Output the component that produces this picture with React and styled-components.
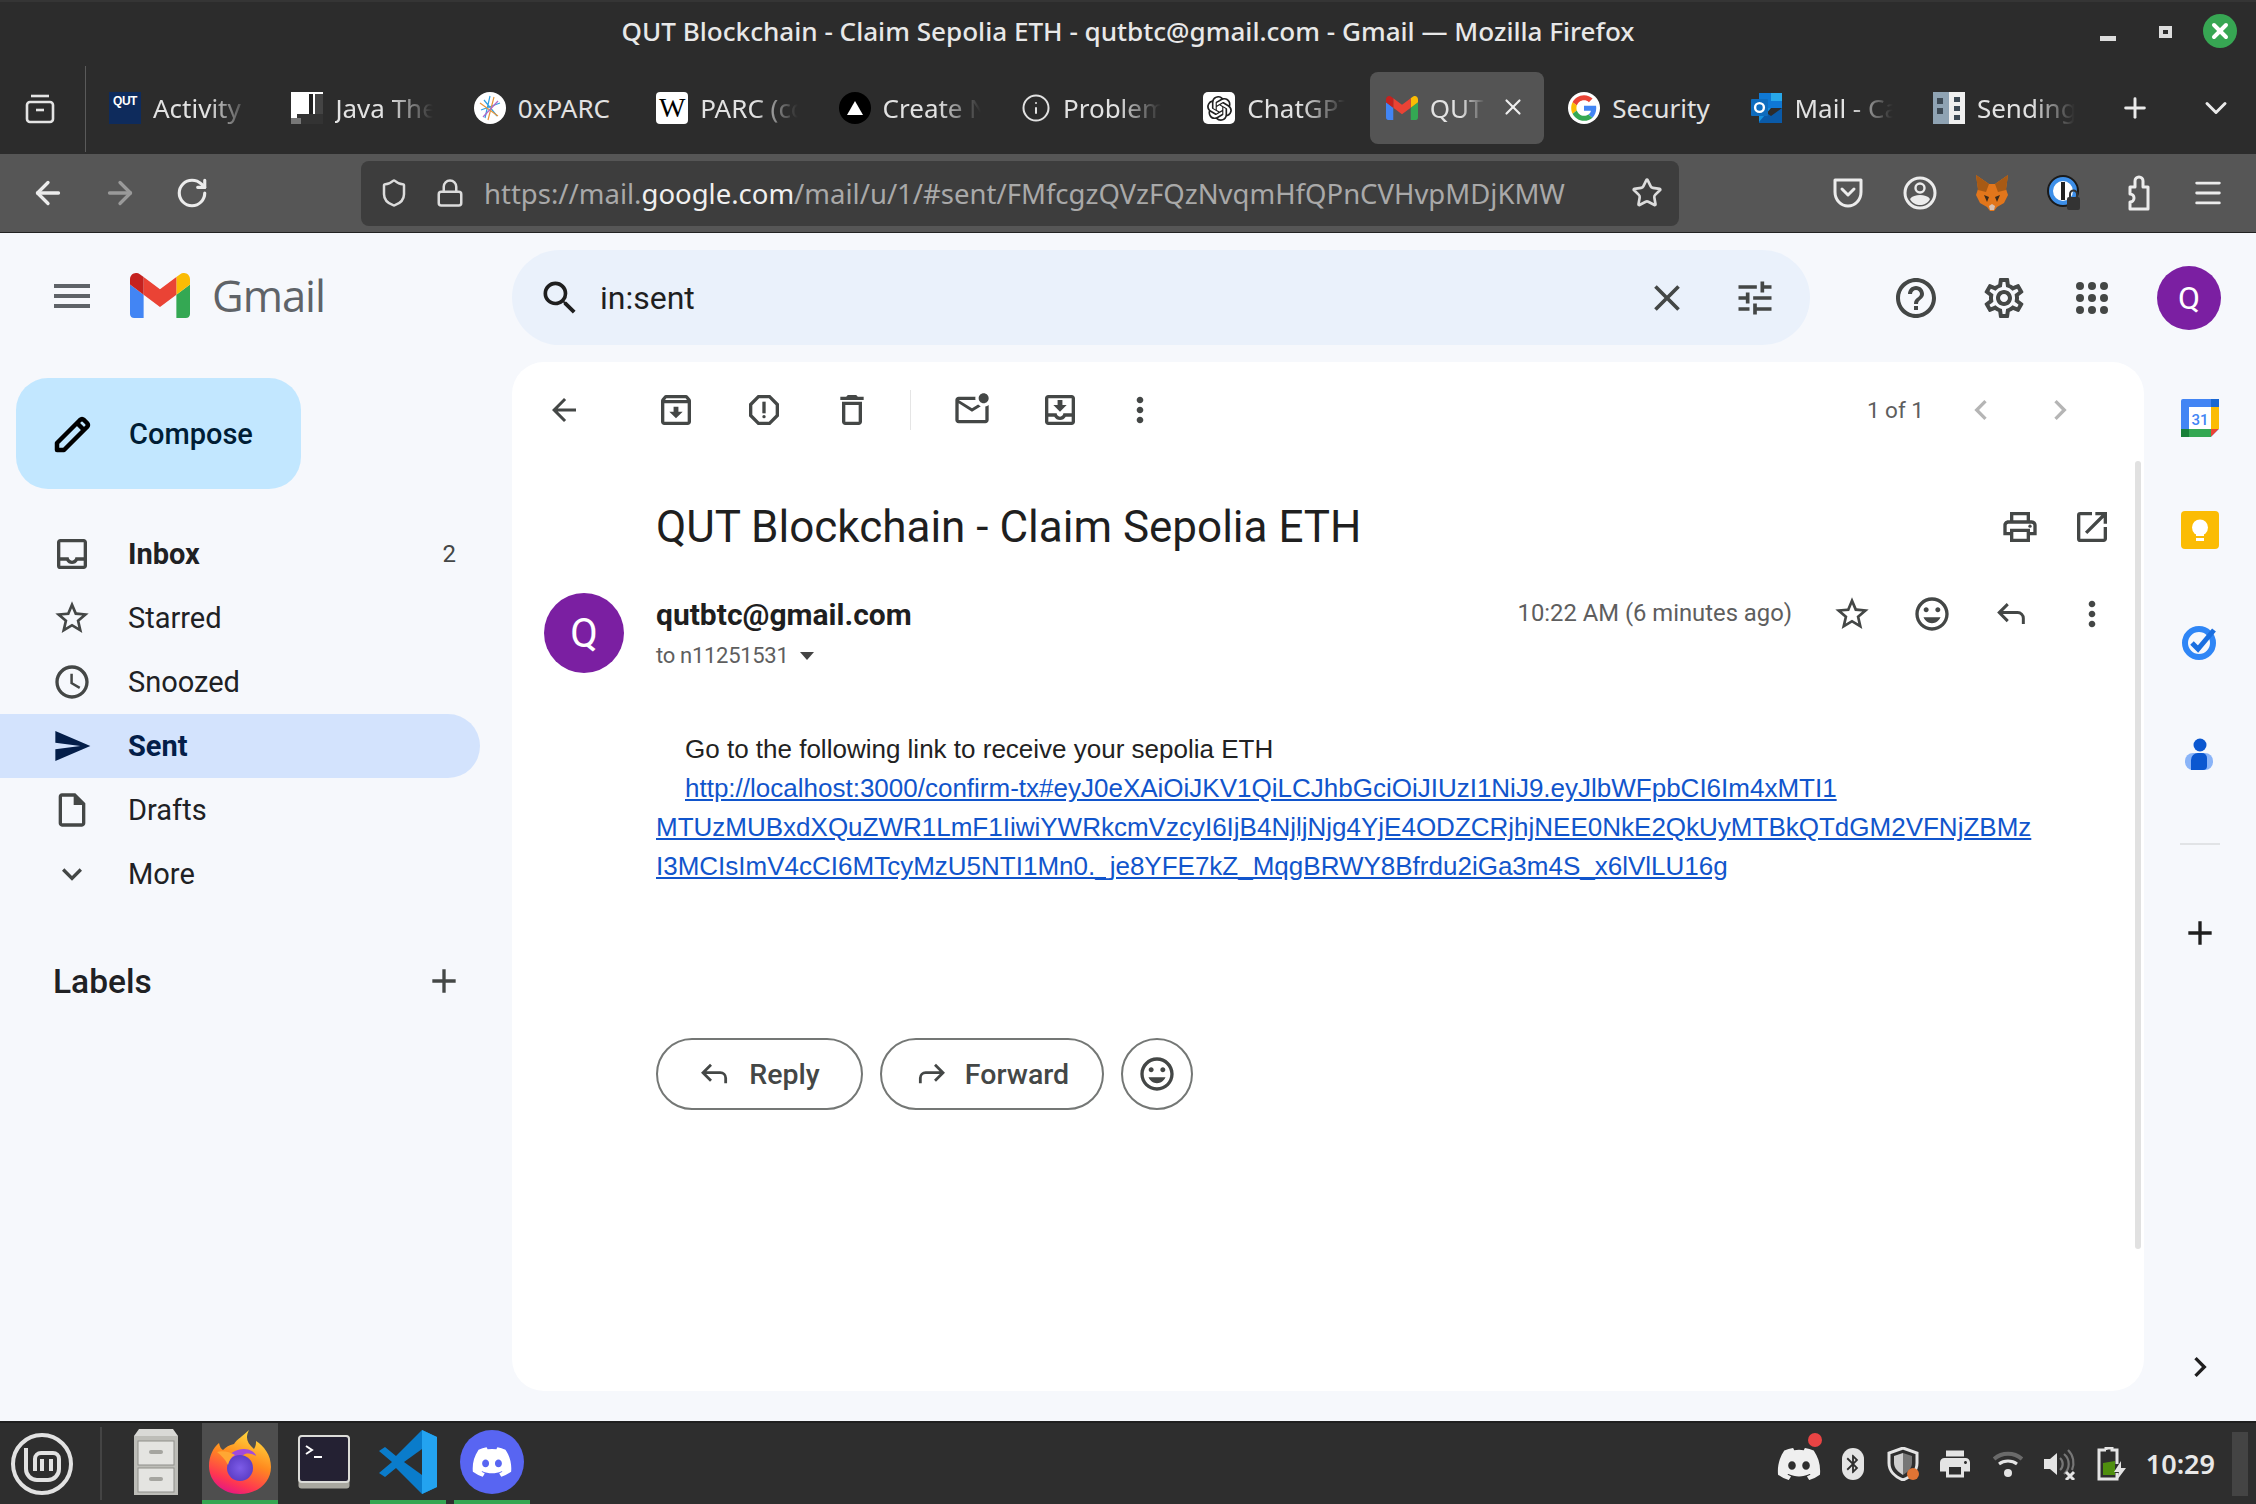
import React from "react";
import styled, { createGlobalStyle } from "styled-components";
import {
  MdMenu, MdSearch, MdClose, MdTune, MdOutlineHelpOutline, MdOutlineSettings, MdArrowBack,
  MdOutlineArchive, MdOutlineReport, MdOutlineDelete, MdOutlineMarkEmailUnread, MdOutlineMoveToInbox,
  MdMoreVert, MdOutlinePrint, MdOpenInNew, MdStarBorder, MdOutlineInsertEmoticon, MdChevronLeft,
  MdChevronRight, MdAdd, MdOutlineInbox, MdAccessTime, MdSend, MdOutlineInsertDriveFile, MdExpandMore,
  MdBluetooth, MdPrint,
} from "react-icons/md";
import { FaDiscord } from "react-icons/fa";
import { SiOpenai } from "react-icons/si";
import { ArrowLeft, ArrowRight, RotateCw, Shield, Lock, Star, Menu, Plus, ChevronDown, Info, X } from "lucide-react";

const Global = createGlobalStyle`
  html, body { margin: 0; padding: 0; background: #f6f8fc; }
  * { box-sizing: border-box; }
`;

const Page = styled.div`
  width: 2256px; height: 1504px; display: flex; flex-direction: column; overflow: hidden;
  font-family: Roboto, "Liberation Sans", sans-serif;
`;
const TitleBar = styled.div`
  height: 70px; background: #2c2c2c; border-top: 2px solid #353535; display: grid; grid-template-columns: 1fr auto 1fr;
  padding-bottom: 10px; align-items: center; color: #e8e8e8;
`;
const WindowTitle = styled.div`
  font: 500 26.1px "Noto Sans", sans-serif; grid-column: 2; white-space: nowrap;
`;
const WindowControls = styled.div`
  grid-column: 3; justify-self: end; display: flex; align-items: center; gap: 31px; padding-right: 19px;
`;
const MinBtn = styled.span` width: 16px; height: 5px; background: #ddd; margin: 15px 12px 0 0; `;
const MaxBtn = styled.span` width: 13px; height: 12px; border: 4px solid #ddd; background: #2c2c2c; margin-top: 2px; `;
const CloseBtn = styled.span`
  width: 34px; height: 34px; border-radius: 50%; background: #37a653; color: #fff; display: flex; align-items: center; justify-content: center;
`;
const TabBar = styled.div` height: 84px; background: #2c2c2c; display: flex; align-items: flex-start; `;
const ListAll = styled.div`
  width: 86px; height: 86px; margin-top: -4px; border-right: 1px solid #5a5a5a; display: flex; align-items: center; justify-content: center; padding-right: 6px; color: #e4e4e4;
`;
const TabStrip = styled.div` display: flex; margin-left: 7px; margin-top: 2px; `;
const Tab = styled.div`
  width: 174px; height: 72px; margin-right: 8.4px; padding-left: 16px; display: flex; align-items: center; gap: 12px; border-radius: 8px;
  background: ${p => (p.$active ? "#545454" : "transparent")}; color: #e2e2e2; position: relative; flex: none;
`;
const TabText = styled.span`
  font: 400 26px "Noto Sans", sans-serif; width: ${p => (p.$w ? p.$w : 100)}px; overflow: hidden; white-space: nowrap;
  -webkit-mask-image: linear-gradient(to right, #000 55%, transparent 98%); mask-image: linear-gradient(to right, #000 55%, transparent 98%);
  ${p => p.$full && "-webkit-mask-image: none; mask-image: none;"}
`;
const Favicon = styled.span`
  width: 32px; height: 32px; flex: none; display: flex; align-items: center; justify-content: center; overflow: hidden; position: relative;
  border-radius: ${p => p.$r || "0"}; background: ${p => p.$bg || "transparent"}; color: ${p => p.$c || "#fff"};
  font: ${p => p.$font || "700 13px 'Liberation Sans', sans-serif"};
`;
const QutFavicon = styled(Favicon)` align-items: flex-start; height: 32px; padding-top: 2px; letter-spacing: -0.5px; `;
const TabClose = styled.span` position: absolute; right: 18px; top: 22px; color: #eee; display: flex; background: #545454; `;
const TabEnd = styled.div` display: flex; align-items: center; height: 72px; margin-top: 2px; `;
const TabEndBtn = styled.span` width: ${p => p.$w}px; margin-left: ${p => p.$ml || 0}px; display: flex; justify-content: center; color: #eaeaea; `;

const Toolbar = styled.div`
  height: 79px; background: #565656; border-bottom: 1px solid #222; display: flex; align-items: center; padding: 0 12px;
`;
const NavBtn = styled.span`
  width: 72px; height: 64px; flex: none; display: flex; align-items: center; justify-content: center; color: ${p => (p.$dim ? "#9a9a9a" : "#ececec")};
`;
const UrlBar = styled.div`
  width: 1318px; height: 65px; margin-left: 133px; margin-right: 133px; background: #3d3d3d; border-radius: 8px; display: flex; align-items: center; padding-left: 18px; color: #dcdcdc; flex: none;
`;
const UrlIcon = styled.span` width: ${p => p.$w}px; flex: none; display: flex; color: #dcdcdc; `;
const UrlText = styled.div` flex: 1; font: 400 27.5px "Noto Sans", sans-serif; color: #a9a9a9; white-space: nowrap; padding-left: 13px;
  b { color: #f0f0f0; font-weight: 400; }
`;

const Mail = styled.div` flex: 1; min-height: 0; background: #f6f8fc; display: grid; grid-template-columns: 512px 1632px 112px; grid-template-rows: 129px 1fr; `;
const Brand = styled.div` display: flex; align-items: center; padding: 0 0 4px 48px; color: #444746; `;
const MenuBtn = styled.span` width: 82px; display: flex; color: #5f6368; padding-top: 1px; `;
const BrandName = styled.span` font: 400 43.5px "Open Sans", sans-serif; color: #5f6368; margin-left: 22px; letter-spacing: -1px; `;
const SearchRow = styled.div` grid-column: 2 / 4; display: flex; align-items: flex-start; padding-top: 17px; `;
const SearchBox = styled.div`
  width: 1298px; height: 95px; border-radius: 48px; background: #eaf1fb; display: flex; align-items: center; padding: 0 11px 0 26px; color: #1f1f1f;
`;
const SearchText = styled.span` flex: 1; font: 400 32px Roboto, sans-serif; margin-left: 18px; `;
const SearchAction = styled.span` width: 88px; display: flex; justify-content: center; color: #444746; `;
const TopIcons = styled.div` display: flex; margin-left: 62px; align-items: center; height: 95px; `;
const TopIcon = styled.span` width: 88px; display: flex; justify-content: center; color: #444746; `;
const UserAvatar = styled.span`
  width: 64px; height: 64px; margin-left: 21px; border-radius: 50%; background: #7b1fa2; color: #fff; display: flex; align-items: center; justify-content: center; font: 400 32px Roboto, sans-serif;
`;

const Sidebar = styled.aside` padding-top: 16px; `;
const Compose = styled.div`
  margin-left: 16px; width: 285px; height: 111px; background: #c2e7ff; border-radius: 32px; display: flex; align-items: center; padding-left: 37px; gap: 36px; color: #001d35;
  font: 500 29px Roboto, sans-serif;
`;
const NavList = styled.nav` margin-top: 33px; width: 480px; `;
const NavRow = styled.div`
  height: 64px; display: flex; align-items: center; padding: 0 24px 0 52px; gap: 36px; border-radius: 0 32px 32px 0;
  background: ${p => (p.$active ? "#d3e3fd" : "transparent")};
  color: ${p => (p.$active ? "#041e49" : "#202124")};
  font: ${p => (p.$bold ? 700 : 400)} 29px Roboto, sans-serif; & > svg { color: ${p => (p.$active ? "#041e49" : "#444746")}; flex: none; }
`;
const NavLabel = styled.span` flex: 1; `;
const Count = styled.span` font-size: 24px; font-weight: 400; color: #444746; `;
const LabelsHead = styled.div`
  margin-top: 45px; padding: 0 16px 0 53px; width: 480px; display: flex; align-items: center; justify-content: space-between; font: 500 33.5px Roboto, sans-serif; color: #202124; height: 60px;
  svg { color: #444746; }
`;

const Panel = styled.main` background: #fff; border-radius: 32px; margin-bottom: 30px; position: relative; display: flex; flex-direction: column; `;
const ScrollThumb = styled.div` position: absolute; right: 3px; top: 99px; height: 788px; width: 6px; border-radius: 3px; background: #e1e1e1; `;
const ActionBar = styled.div` height: 96px; display: flex; align-items: center; color: #444746; `;
const Act = styled.span` width: ${p => p.$w || 88}px; flex: none; display: flex; justify-content: center; color: ${p => p.$c || "#444746"}; margin-left: ${p => p.$ml || 0}px; `;
const ActDivider = styled.span` width: 1px; height: 40px; background: #e5e5e5; margin: 0 17px 0 14px; flex: none; `;
const Pager = styled.span` font: 400 22.5px Roboto, sans-serif; color: #5e5e5e; margin-left: auto; margin-right: 18px; `;
const SubjectRow = styled.div` height: 124px; padding-left: 144px; padding-right: 16px; display: flex; align-items: center; margin-top: 7px; `;
const Subject = styled.h1` flex: 1; margin: 0; font: 400 44px Roboto, sans-serif; color: #1f1f1f; `;
const MetaRow = styled.div` display: flex; margin-top: 4px; padding-left: 32px; height: 90px; align-items: flex-start; `;
const SenderAvatar = styled.span`
  width: 80px; height: 80px; border-radius: 50%; background: #7b1fa2; color: #fff; display: flex; align-items: center; justify-content: center; font: 400 40px Roboto, sans-serif; flex: none;
`;
const SenderCol = styled.div` margin-left: 32px; flex: 1; padding-top: 4px; `;
const SenderName = styled.div` font: 700 30px Roboto, sans-serif; color: #1f1f1f; line-height: 36px; `;
const SenderTo = styled.div` font: 400 22px Roboto, sans-serif; letter-spacing: -0.3px; color: #5e5e5e; line-height: 30px; margin-top: 8px; display: flex; align-items: center; gap: 8px; `;
const Caret = styled.span` width: 0; height: 0; border: 7px solid transparent; border-top: 8px solid #444; margin-top: 7px; margin-left: 4px; `;
const Time = styled.span` font: 400 23.8px Roboto, sans-serif; color: #5e5e5e; line-height: 36px; margin: 2px 20px 0 0; `;
const MsgIcons = styled.div` display: flex; margin: 3px 12px 0 0; `;
const MsgIcon = styled.span` width: 80px; height: 36px; display: flex; justify-content: center; align-items: center; color: #444746; `;
const Body = styled.div` padding-left: 144px; margin-top: 47px; font: 400 26px/39px "Liberation Sans", Arial, sans-serif; color: #222; `;
const BodyLine = styled.div` padding-left: ${p => (p.$indent ? 29 : 0)}px; white-space: nowrap; `;
const Link = styled.a` color: #1155cc; text-decoration: underline; `;
const ReplyRow = styled.div` display: flex; gap: 17px; padding-left: 144px; margin-top: 152px; `;
const ReplyBtn = styled.span`
  height: 72px; width: ${p => p.$w}px; border: 2px solid #747775; border-radius: 36px; display: flex; align-items: center; justify-content: center; gap: 18px; font: 500 28.5px Roboto, sans-serif; color: #444746; flex: none;
`;
const ReplySvg = styled.svg` transform: ${p => (p.$flip ? "scaleX(-1)" : "none")}; `;

const Rail = styled.aside` display: flex; flex-direction: column; align-items: center; `;
const RailItem = styled.div` height: 112px; width: 112px; display: flex; align-items: center; justify-content: center; flex: none; `;
const RailDivider = styled.div` width: 40px; height: 2px; background: #e1e3e6; margin: 33px 0 32px; flex: none; `;
const RailSpacer = styled.div` flex: 1; `;
const RailChevron = styled.div` height: 60px; display: flex; align-items: center; margin-bottom: 24px; color: #1f1f1f; `;

const Taskbar = styled.footer`
  height: 83px; background: #2e2e2e; border-top: 2px solid #1f1f1f; display: flex; position: relative; flex: none; align-items: stretch;
`;
const StartBtn = styled.div` width: 84px; display: flex; align-items: center; justify-content: center; color: #e0e0e0; flex: none; `;
const TaskSep = styled.div` width: 2px; background: #444; margin: 4px 16px; flex: none; `;
const TaskItem = styled.div`
  width: 76px; margin-right: 8px; display: flex; align-items: center; justify-content: center; flex: none; position: relative;
  background: ${p => (p.$active ? "#4e4e4e" : "transparent")};
  border-bottom: 4px solid ${p => (p.$run ? "#35a652" : "transparent")};
`;
const DiscordBubble = styled.span`
  width: 64px; height: 64px; border-radius: 50%; background: #5865f2; color: #fff; display: flex; align-items: center; justify-content: center;
`;
const Tray = styled.div` margin-left: auto; display: flex; align-items: center; color: #e4e4e4; `;
const TrayItem = styled.span` width: ${p => p.$w || 52}px; display: flex; justify-content: center; position: relative; `;
const BluetoothOval = styled.span`
  width: 22px; height: 32px; border-radius: 11px; background: #e4e4e4; color: #2e2e2e; display: flex; align-items: center; justify-content: center;
`;
const Clock = styled.span` font: 600 27px "Noto Sans", sans-serif; color: #e8e8e8; margin-left: 8px; margin-right: 17px; `;
const ShowDesk = styled.span` width: 16px; height: 64px; background: #444; margin-right: 8px; `;
const Badge = styled.span` position: absolute; top: -8px; right: 6px; width: 14px; height: 14px; border-radius: 50%; background: #e94444; `;

const Ic = ({ as: C, s = 44, ...r }) => <C size={s} {...r} />;

const GmailLogo = ({ w = 60, h = 45 }) => (
  <svg width={w} height={h} viewBox="52 42 88 66">
    <path fill="#4285f4" d="M58 108h14V74L52 59v43c0 3.32 2.69 6 6 6" />
    <path fill="#34a853" d="M120 108h14c3.32 0 6-2.69 6-6V59l-20 15" />
    <path fill="#fbbc04" d="M120 48v26l20-15v-8c0-7.42-8.47-11.65-14.4-7.2" />
    <path fill="#ea4335" d="M72 74V48l24 18 24-18v26L96 92" />
    <path fill="#c5221f" d="M52 51v8l20 15V48l-5.6-4.2c-5.94-4.45-14.4-.22-14.4 7.2" />
  </svg>
);
const GoogleG = () => (
  <svg width="32" height="32" viewBox="-6 -6 60 60">
    <circle cx="24" cy="24" r="30" fill="#fff" />
    <path fill="#EA4335" d="M24 9.5c3.54 0 6.71 1.22 9.21 3.6l6.85-6.85C35.9 2.38 30.47 0 24 0 14.62 0 6.51 5.38 2.56 13.22l7.98 6.19C12.43 13.72 17.74 9.5 24 9.5z" />
    <path fill="#4285F4" d="M46.98 24.55c0-1.57-.15-3.09-.38-4.55H24v9.02h12.94c-.58 2.96-2.26 5.48-4.78 7.18l7.73 6c4.51-4.18 7.09-10.36 7.09-17.65z" />
    <path fill="#FBBC05" d="M10.53 28.59c-.48-1.45-.76-2.99-.76-4.59s.27-3.14.76-4.59l-7.98-6.19C.92 16.46 0 20.12 0 24c0 3.88.92 7.54 2.56 10.78l7.97-6.19z" />
    <path fill="#34A853" d="M24 48c6.48 0 11.93-2.13 15.89-5.81l-7.73-6c-2.15 1.45-4.92 2.3-8.16 2.3-6.26 0-11.57-4.22-13.47-9.91l-7.98 6.19C6.51 42.62 14.62 48 24 48z" />
  </svg>
);
const ParcIcon = () => (
  <svg width="32" height="32" viewBox="0 0 32 32">
    <circle cx="16" cy="16" r="16" fill="#fff" />
    <path d="M16 4l-5 22M10 8l13 16M7 18l19-7" stroke="#2f9fe0" strokeWidth="1.2" fill="none" />
    <path d="M20 5l-6 23M6 11l18 13" stroke="#e8963a" strokeWidth="1.2" fill="none" />
    <path d="M24 9L9 25" stroke="#b06ac8" strokeWidth="1.2" fill="none" />
  </svg>
);
const JavaIcon = () => (
  <svg width="32" height="32" viewBox="0 0 32 32">
    <rect width="32" height="32" fill="#fff" />
    <rect x="6" y="22" width="26" height="10" fill="#333" />
    <rect x="18" y="2" width="4" height="20" fill="#222" />
    <rect x="24" y="2" width="8" height="20" fill="#444" />
    <rect x="0" y="26" width="10" height="6" fill="#777" />
  </svg>
);
const OutlookIcon = () => (
  <svg width="32" height="32" viewBox="0 0 32 32">
    <rect x="8" y="1" width="23" height="15" fill="#0f78d4" />
    <rect x="20" y="1" width="11" height="8" fill="#28a8ea" />
    <path d="M8 16l12 8 11-8v15H8z" fill="#0a5aa8" />
    <path d="M8 16h12l-12 14z" fill="#1490df" />
    <rect x="0" y="7" width="17" height="17" fill="#0f6cbd" rx="1" />
    <circle cx="8.5" cy="15.5" r="4.4" fill="none" stroke="#fff" strokeWidth="2.4" />
  </svg>
);
const SendingIcon = () => (
  <svg width="32" height="32" viewBox="0 0 32 32">
    <rect width="32" height="32" fill="#8fa3b3" />
    <rect x="16" y="0" width="16" height="32" fill="#f0f0f0" />
    <rect x="4" y="6" width="6" height="6" fill="#3d4a55" />
    <rect x="4" y="16" width="6" height="6" fill="#3d4a55" />
    <rect x="21" y="5" width="6" height="5" fill="#3d4a55" />
    <rect x="21" y="14" width="6" height="5" fill="#3d4a55" />
    <rect x="21" y="23" width="6" height="5" fill="#3d4a55" />
  </svg>
);
const FoxIcon = () => (
  <svg width="36" height="40" viewBox="0 0 36 40">
    <path d="M2 2l13 9h6l13-9-2 14 2 6-4 8-7 4-3 4h-4l-3-4-7-4-4-8 2-6z" fill="#e2761b" />
    <path d="M2 2l13 9-3 8-8-2zM34 2L21 11l3 8 8-2z" fill="#a85a14" />
    <path d="M10 22l5 2-2 5zM26 22l-5 2 2 5z" fill="#3b2a1a" />
    <path d="M15 33l3-2 3 2-1 4h-4z" fill="#d7c1b3" />
  </svg>
);
const OnePass = () => (
  <svg width="36" height="40" viewBox="0 0 36 40">
    <circle cx="17" cy="18" r="16" fill="#1a1a1a" />
    <circle cx="17" cy="18" r="12" fill="#fff" stroke="#3d8fe8" strokeWidth="4" />
    <rect x="15" y="9" width="4" height="18" fill="#222" />
    <rect x="21" y="24" width="13" height="13" rx="2" fill="#333" />
    <path d="M24 24v-3a3.5 3.5 0 017 0v3" fill="none" stroke="#333" strokeWidth="2" />
  </svg>
);
const PocketIcon = () => (
  <svg width="34" height="34" viewBox="0 0 34 34" fill="none" stroke="#ececec" strokeWidth="3">
    <path d="M4 4h26v12c0 8-6 14-13 14S4 24 4 16z" strokeLinejoin="round" />
    <path d="M11 13l6 6 6-6" strokeLinecap="round" strokeLinejoin="round" />
  </svg>
);
const AccountIcon = () => (
  <svg width="34" height="34" viewBox="0 0 34 34">
    <circle cx="17" cy="17" r="15" fill="none" stroke="#ececec" strokeWidth="3" />
    <circle cx="17" cy="12" r="4.5" fill="none" stroke="#ececec" strokeWidth="2.4" />
    <path d="M7 23c2-3 6-4 10-4s8 1 10 4c-2 4-6 6-10 6s-8-2-10-6z" fill="#ececec" />
  </svg>
);
const PuzzleIcon = () => (
  <svg width="34" height="36" viewBox="0 0 34 36" fill="none" stroke="#ececec" strokeWidth="3" strokeLinejoin="round">
    <path d="M13 12h5V6a4 4 0 018 0v6h5v22H13v-7a4 4 0 000-8 4 4 0 000 0z" transform="translate(-2 0)" />
  </svg>
);
const ReplyGlyph = ({ s = 32, flip }) => (
  <ReplySvg $flip={flip} width={s} height={s} viewBox="0 0 24 24" fill="none" stroke="#444746" strokeWidth="2.1">
    <path d="M9 5l-6 6 6 6M3 11h13a4 4 0 014 4v4" />
  </ReplySvg>
);
const AppsIcon = () => (
  <svg width="48" height="48" viewBox="0 0 48 48" fill="#444746">
    {[12, 24, 36].flatMap(y => [12, 24, 36].map(x => <circle key={`${x}-${y}`} cx={x} cy={y} r="4" />))}
  </svg>
);
const CalendarIcon = () => (
  <svg width="38" height="38" viewBox="0 0 38 38">
    <rect width="38" height="38" rx="2" fill="#4285f4" />
    <rect x="30" y="0" width="8" height="8" fill="#1967d2" />
    <rect x="30" y="8" width="8" height="22" fill="#fbbc04" />
    <rect x="8" y="30" width="22" height="8" fill="#34a853" />
    <rect x="0" y="30" width="8" height="8" fill="#188038" />
    <path d="M30 30h8l-8 8z" fill="#ea4335" />
    <path d="M30 38l8-8v8z" fill="#f6f8fc" />
    <rect x="8" y="8" width="22" height="22" fill="#fff" />
    <text x="19" y="25.5" textAnchor="middle" fontFamily="Roboto, sans-serif" fontSize="15" fontWeight="500" fill="#4285f4">31</text>
  </svg>
);
const KeepIcon = () => (
  <svg width="38" height="38" viewBox="0 0 38 38">
    <rect width="38" height="38" rx="4" fill="#fbbc04" />
    <circle cx="19" cy="16.5" r="8" fill="#fff" />
    <rect x="15" y="22" width="8" height="3" fill="#fff" />
    <rect x="15" y="27" width="8" height="3" fill="#fff" />
  </svg>
);
const TasksIcon = () => (
  <svg width="38" height="38" viewBox="0 0 38 38" fill="none">
    <circle cx="18" cy="20" r="14" stroke="#2f86f6" strokeWidth="6" />
    <path d="M11 20l6 6L33 7" stroke="#1a6fe0" strokeWidth="5" />
  </svg>
);
const ContactsIcon = () => (
  <svg width="30" height="32" viewBox="0 0 30 32">
    <circle cx="15" cy="7" r="6.5" fill="#0b57d0" />
    <rect x="0" y="15" width="28" height="17" rx="8" fill="#8ab4f8" />
    <path d="M6 32V22a7 7 0 017-7h4a5 5 0 015 5v8a4 4 0 01-4 4z" fill="#0b57d0" />
  </svg>
);
const MintLogo = () => (
  <svg width="64" height="64" viewBox="0 0 64 64" fill="none" stroke="#e2e2e2">
    <circle cx="32" cy="32" r="29" strokeWidth="4" />
    <path d="M16 16v21a11 11 0 0011 11h11a11 11 0 0011-11V27a6 6 0 00-6-6h-12a6 6 0 00-6 6v12M32 27v12M41 27v12" strokeWidth="4" />
  </svg>
);
const FilesIcon = () => (
  <svg width="44" height="66" viewBox="0 0 44 66">
    <path d="M5 0h34l5 7v59H0V7z" fill="#d9d9d6" />
    <rect x="0" y="7" width="44" height="59" fill="#bdbdb8" />
    <rect x="4" y="12" width="36" height="24" fill="#e4e4e1" stroke="#8f8f8a" />
    <rect x="4" y="39" width="36" height="24" fill="#e4e4e1" stroke="#8f8f8a" />
    <rect x="15" y="21" width="14" height="4" rx="2" fill="#a5a5a0" />
    <rect x="15" y="48" width="14" height="4" rx="2" fill="#a5a5a0" />
  </svg>
);
const FirefoxIcon = () => (
  <svg width="62" height="64" viewBox="0 0 62 64">
    <defs>
      <linearGradient id="ff1" x1="0.7" y1="0" x2="0.3" y2="1">
        <stop offset="0" stopColor="#ffe03f" /><stop offset="0.45" stopColor="#ff8a1f" /><stop offset="0.8" stopColor="#ff3750" /><stop offset="1" stopColor="#e31587" />
      </linearGradient>
      <radialGradient id="ff2" cx="0.5" cy="0.5" r="0.55">
        <stop offset="0" stopColor="#7d5ce8" /><stop offset="1" stopColor="#5a3cc4" />
      </radialGradient>
    </defs>
    <path d="M40 0c-4 8-2 13 5 19 2-3 2-6 2-8 8 5 15 14 15 26 0 15-13 27-31 27C14 64 0 52 0 36 0 26 4 18 10 13c1 4 2 6 4 7 3-3 6-5 11-6 3-5 9-8 15-14z" fill="url(#ff1)" />
    <path d="M17 32c2-8 9-13 18-13 6 0 11 3 12 7-3-2-7-3-11-2l-9 5z" fill="#a14bdc" />
    <circle cx="31" cy="38" r="13" fill="url(#ff2)" />
    <path d="M8 22c6-2 13 0 18 3-4 2-6 6-7 10-3-6-7-10-11-13z" fill="#ffa733" />
  </svg>
);
const TerminalIcon = () => (
  <svg width="52" height="54" viewBox="0 0 52 54">
    <rect x="0.5" y="0.5" width="51" height="53" rx="3" fill="#a9a8a0" />
    <rect x="1" y="1" width="50" height="46" rx="3" fill="#242133" stroke="#dcdcd8" strokeWidth="2" />
    <path d="M8 11l6 4-6 4" stroke="#fff" strokeWidth="2" fill="none" />
    <rect x="16" y="21" width="8" height="2" fill="#fff" />
  </svg>
);
const VsCodeIcon = () => (
  <svg width="58" height="64" viewBox="0 0 58 64">
    <path d="M43 0L17 26 6 17 0 21l13 11L0 43l6 4 11-9 26 26 15-7V7z" fill="#0a7ccb" />
    <path d="M43 0l15 7v50l-15 7z" fill="#23a3f0" />
    <path d="M43 19L25 32l18 13z" fill="#2e2e2e" />
  </svg>
);
const TrayShield = () => (
  <svg width="34" height="34" viewBox="0 0 34 34">
    <path d="M17 1l14 5v10c0 8-6 14-14 17C9 30 3 24 3 16V6z" fill="none" stroke="#e4e4e4" strokeWidth="3" />
    <path d="M17 6l9 3v7c0 5-4 9-9 12z" fill="#777" />
    <path d="M17 6L8 9v7c0 5 4 9 9 12z" fill="#cfcfcf" />
    <circle cx="27" cy="27" r="6" fill="#e07434" />
  </svg>
);
const TrayWifi = () => (
  <svg width="30" height="28" viewBox="0 0 30 28" fill="none">
    <path d="M1 9c8-7 20-7 28 0" stroke="#6a6a6a" strokeWidth="4" />
    <path d="M6 14c5-4 13-4 18 0" stroke="#e4e4e4" strokeWidth="3" />
    <circle cx="15" cy="23" r="4" fill="#e4e4e4" />
  </svg>
);
const TrayVolume = () => (
  <svg width="34" height="32" viewBox="0 0 34 32">
    <path d="M1 11h6l7-6v22l-7-6H1z" fill="#e4e4e4" />
    <path d="M17 10a8 8 0 010 12M21 6a13 13 0 010 20M25 2a18 18 0 014 20" fill="none" stroke="#777" strokeWidth="2.2" />
    <path d="M23 24l8 8M31 24l-8 8" stroke="#e4e4e4" strokeWidth="3" />
  </svg>
);
const TrayBattery = () => (
  <svg width="30" height="34" viewBox="0 0 30 34">
    <path d="M9 3V1h6v2h5v14M20 26v6H2V3h7" fill="none" stroke="#e4e4e4" strokeWidth="3" />
    <path d="M6 16l12-2v14H6z" fill="#4f8f0e" />
    <path d="M24 14l-7 11h5l-2 8 9-12h-5z" fill="#e4e4e4" />
  </svg>
);

const tabs = [
  { t: "Activity", f: <QutFavicon $bg="#0e2b5c" $font="700 12px 'Liberation Sans', sans-serif">QUT</QutFavicon> },
  { t: "Java The", f: <JavaIcon /> },
  { t: "0xPARC", f: <ParcIcon />, full: true },
  { t: "PARC (co", f: <Favicon $bg="#fff" $r="4px" $c="#000" $font="400 28px 'Liberation Serif', serif">W</Favicon> },
  { t: "Create N", f: <Favicon $bg="#000" $r="50%"><svg width="18" height="18" viewBox="0 0 18 18"><path d="M9 2l8 14H1z" fill="#fff" /></svg></Favicon> },
  { t: "Problem", f: <Info size={30} strokeWidth={1.6} color="#e2e2e2" /> },
  { t: "ChatGPT", f: <Favicon $bg="#fff" $r="5px" $c="#222"><SiOpenai size={25} /></Favicon> },
  { t: "QUT B", f: <GmailLogo w={32} h={24} />, active: true, w: 56 },
  { t: "Security", f: <GoogleG />, full: true },
  { t: "Mail - Ca", f: <OutlookIcon /> },
  { t: "Sending", f: <SendingIcon /> },
];

const nav = [
  { l: "Inbox", i: MdOutlineInbox, bold: true, c: "2" },
  { l: "Starred", i: MdStarBorder },
  { l: "Snoozed", i: MdAccessTime },
  { l: "Sent", i: MdSend, bold: true, active: true },
  { l: "Drafts", i: MdOutlineInsertDriveFile },
  { l: "More", i: MdExpandMore },
];

export default function App() {
  return (
    <Page>
      <Global />
      <TitleBar>
        <WindowTitle>QUT Blockchain - Claim Sepolia ETH - qutbtc@gmail.com - Gmail — Mozilla Firefox</WindowTitle>
        <WindowControls>
          <MinBtn /><MaxBtn />
          <CloseBtn><X size={24} strokeWidth={4} /></CloseBtn>
        </WindowControls>
      </TitleBar>
      <TabBar>
        <ListAll>
          <svg width="32" height="32" viewBox="0 0 32 32" fill="none" stroke="#e4e4e4" strokeWidth="2.6">
            <rect x="3" y="9" width="26" height="20" rx="3" /><path d="M7 3h18" /><path d="M12 17h8" />
          </svg>
        </ListAll>
        <TabStrip>
          {tabs.map(t => (
            <Tab key={t.t} $active={t.active}>
              {t.f}
              <TabText $full={t.full} $w={t.w}>{t.t}</TabText>
              {t.active && <TabClose><X size={26} strokeWidth={2} /></TabClose>}
            </Tab>
          ))}
        </TabStrip>
        <TabEnd>
          <TabEndBtn $w={72}><Plus size={32} strokeWidth={2.2} /></TabEndBtn>
          <TabEndBtn $w={40} $ml={25}><ChevronDown size={36} strokeWidth={2} /></TabEndBtn>
        </TabEnd>
      </TabBar>
      <Toolbar>
        <NavBtn><ArrowLeft size={36} strokeWidth={2.2} /></NavBtn>
        <NavBtn $dim><ArrowRight size={36} strokeWidth={2.2} /></NavBtn>
        <NavBtn><RotateCw size={34} strokeWidth={2.2} /></NavBtn>
        <UrlBar>
          <UrlIcon $w={56}><Shield size={30} strokeWidth={2} /></UrlIcon>
          <UrlIcon $w={36}><Lock size={30} strokeWidth={2} /></UrlIcon>
          <UrlText>https://mail.<b>google.com</b>/mail/u/1/#sent/FMfcgzQVzFQzNvqmHfQPnCVHvpMDjKMW</UrlText>
          <UrlIcon $w={48}><Star size={32} strokeWidth={2} /></UrlIcon>
        </UrlBar>
        <NavBtn><PocketIcon /></NavBtn>
        <NavBtn><AccountIcon /></NavBtn>
        <NavBtn><FoxIcon /></NavBtn>
        <NavBtn><OnePass /></NavBtn>
        <NavBtn><PuzzleIcon /></NavBtn>
        <NavBtn><Menu size={34} strokeWidth={2} /></NavBtn>
      </Toolbar>
      <Mail>
        <Brand>
          <MenuBtn><Ic as={MdMenu} s={48} /></MenuBtn>
          <GmailLogo />
          <BrandName>Gmail</BrandName>
        </Brand>
        <SearchRow>
          <SearchBox>
            <Ic as={MdSearch} s={44} color="#1f1f1f" />
            <SearchText>in:sent</SearchText>
            <SearchAction><Ic as={MdClose} s={44} /></SearchAction>
            <SearchAction><Ic as={MdTune} s={44} /></SearchAction>
          </SearchBox>
          <TopIcons>
            <TopIcon><Ic as={MdOutlineHelpOutline} s={48} /></TopIcon>
            <TopIcon><Ic as={MdOutlineSettings} s={48} /></TopIcon>
            <TopIcon><AppsIcon /></TopIcon>
            <UserAvatar>Q</UserAvatar>
          </TopIcons>
        </SearchRow>
        <Sidebar>
          <Compose>
            <svg width="40" height="40" viewBox="0 0 40 40" fill="none" stroke="#000" strokeWidth="4.5" strokeLinejoin="round">
              <path d="M4 29L27 6a3 3 0 014 0l3 3a3 3 0 010 4L11 36H4z" />
              <path d="M24 9l7 7" />
            </svg>
            Compose
          </Compose>
          <NavList>
            {nav.map(n => {
              const I = n.i;
              return (
                <NavRow key={n.l} $bold={n.bold} $active={n.active}>
                  <I size={40} />
                  <NavLabel>{n.l}</NavLabel>
                  {n.c && <Count>{n.c}</Count>}
                </NavRow>
              );
            })}
          </NavList>
          <LabelsHead>Labels<Ic as={MdAdd} s={40} /></LabelsHead>
        </Sidebar>
        <Panel>
          <ScrollThumb />
          <ActionBar>
            <Act $ml={8}><Ic as={MdArrowBack} s={36} /></Act>
            <Act $ml={24}><Ic as={MdOutlineArchive} s={40} /></Act>
            <Act><Ic as={MdOutlineReport} s={40} /></Act>
            <Act><Ic as={MdOutlineDelete} s={40} /></Act>
            <ActDivider />
            <Act><Ic as={MdOutlineMarkEmailUnread} s={40} /></Act>
            <Act><Ic as={MdOutlineMoveToInbox} s={40} /></Act>
            <Act $w={72}><Ic as={MdMoreVert} s={40} /></Act>
            <Pager>1 of 1</Pager>
            <Act $w={78} $c="#b5b5b5"><Ic as={MdChevronLeft} s={40} /></Act>
            <Act $w={80} $c="#b5b5b5"><Ic as={MdChevronRight} s={40} /></Act>
            <Act $w={44} />
          </ActionBar>
          <SubjectRow>
            <Subject>QUT Blockchain - Claim Sepolia ETH</Subject>
            <Act $w={72}><Ic as={MdOutlinePrint} s={40} /></Act>
            <Act $w={72}><Ic as={MdOpenInNew} s={40} /></Act>
          </SubjectRow>
          <MetaRow>
            <SenderAvatar>Q</SenderAvatar>
            <SenderCol>
              <SenderName>qutbtc@gmail.com</SenderName>
              <SenderTo>to n11251531<Caret /></SenderTo>
            </SenderCol>
            <Time>10:22 AM (6 minutes ago)</Time>
            <MsgIcons>
              <MsgIcon><Ic as={MdStarBorder} s={40} /></MsgIcon>
              <MsgIcon><Ic as={MdOutlineInsertEmoticon} s={40} /></MsgIcon>
              <MsgIcon><ReplyGlyph s={34} /></MsgIcon>
              <MsgIcon><Ic as={MdMoreVert} s={40} /></MsgIcon>
            </MsgIcons>
          </MetaRow>
          <Body>
            <BodyLine $indent>Go to the following link to receive your sepolia ETH</BodyLine>
            <BodyLine $indent><Link>http://localhost:3000/confirm-tx#eyJ0eXAiOiJKV1QiLCJhbGciOiJIUzI1NiJ9.eyJlbWFpbCI6Im4xMTI1</Link></BodyLine>
            <BodyLine><Link>MTUzMUBxdXQuZWR1LmF1IiwiYWRkcmVzcyI6IjB4NjljNjg4YjE4ODZCRjhjNEE0NkE2QkUyMTBkQTdGM2VFNjZBMz</Link></BodyLine>
            <BodyLine><Link>I3MCIsImV4cCI6MTcyMzU5NTI1Mn0._je8YFE7kZ_MqgBRWY8Bfrdu2iGa3m4S_x6lVlLU16g</Link></BodyLine>
          </Body>
          <ReplyRow>
            <ReplyBtn $w={207}><ReplyGlyph s={32} />Reply</ReplyBtn>
            <ReplyBtn $w={224}><ReplyGlyph s={32} flip />Forward</ReplyBtn>
            <ReplyBtn $w={72}><Ic as={MdOutlineInsertEmoticon} s={40} /></ReplyBtn>
          </ReplyRow>
        </Panel>
        <Rail>
          <RailItem><CalendarIcon /></RailItem>
          <RailItem><KeepIcon /></RailItem>
          <RailItem><TasksIcon /></RailItem>
          <RailItem><ContactsIcon /></RailItem>
          <RailDivider />
          <RailItem><Ic as={MdAdd} s={40} color="#1f1f1f" /></RailItem>
          <RailSpacer />
          <RailChevron><Ic as={MdChevronRight} s={40} /></RailChevron>
        </Rail>
      </Mail>
      <Taskbar>
        <StartBtn><MintLogo /></StartBtn>
        <TaskSep />
        <TaskItem><FilesIcon /></TaskItem>
        <TaskItem $active $run><FirefoxIcon /></TaskItem>
        <TaskItem><TerminalIcon /></TaskItem>
        <TaskItem $run><VsCodeIcon /></TaskItem>
        <TaskItem $run><DiscordBubble><FaDiscord size={42} /></DiscordBubble></TaskItem>
        <Tray>
          <TrayItem $w={58}><FaDiscord size={46} color="#efefef" /><Badge /></TrayItem>
          <TrayItem $w={50}><BluetoothOval><MdBluetooth size={26} /></BluetoothOval></TrayItem>
          <TrayItem $w={50}><TrayShield /></TrayItem>
          <TrayItem $w={54}><MdPrint size={36} /></TrayItem>
          <TrayItem $w={52}><TrayWifi /></TrayItem>
          <TrayItem $w={52}><TrayVolume /></TrayItem>
          <TrayItem $w={52}><TrayBattery /></TrayItem>
          <Clock>10:29</Clock>
          <ShowDesk />
        </Tray>
      </Taskbar>
    </Page>
  );
}
